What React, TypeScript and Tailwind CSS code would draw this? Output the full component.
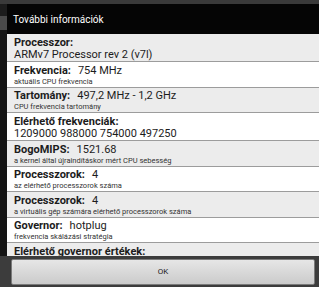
type Row = {
  label: string
  value?: string
  below?: string
  sub?: string
}

const rows: Row[] = [
  { label: "Processzor:", below: "ARMv7 Processor rev 2 (v7l)" },
  { label: "Frekvencia:", value: "754 MHz", sub: "aktuális CPU frekvencia" },
  { label: "Tartomány:", value: "497,2 MHz - 1,2 GHz", sub: "CPU frekvencia tartomány" },
  { label: "Elérhető frekvenciák:", below: "1209000 988000 754000 497250" },
  { label: "BogoMIPS:", value: "1521.68", sub: "a kernel által újraindításkor mért CPU sebesség" },
  { label: "Processzorok:", value: "4", sub: "az elérhető processzorok száma" },
  { label: "Processzorok:", value: "4", sub: "a virtuális gép számára elérhető processzorok száma" },
  { label: "Governor:", value: "hotplug", sub: "frekvencia skálázási stratégia" },
  { label: "Elérhető governor értékek:", below: "hotplug interactive conservative ondemand userspace powersave performance" },
]

export default function App() {
  return (
    <div className="w-[319px] h-[287px] bg-[#161616] flex flex-col overflow-hidden" style={{ fontFamily: "Roboto, 'Liberation Sans', sans-serif" }}>
      <div className="h-[4px] shrink-0 bg-[#3a3a3a]" />
      <div className="flex flex-1 min-h-0">
        <div className="w-[7px] flex flex-col">
          <div className="h-[12px] bg-[#1c1c1c]" />
          <div className="h-[14px] bg-[#4a4a4a]" />
          <div className="flex-1 bg-[#141414]" />
        </div>
        <div className="flex-1 flex flex-col min-w-0">
          <div className="h-[30px] shrink-0 bg-[#050505] flex items-center px-[6px] text-white text-[10px]">
            További információk
          </div>
          <div className="flex-1 min-h-0 overflow-hidden">
            {rows.map((r, i) => (
              <div
                key={i}
                className={`px-[7px] pt-[2.5px] border-b border-[#9c9c9c] text-[#1c1c1c] ${i % 2 === 0 ? "bg-[#ececec]" : "bg-white"} ${r.below ? "pb-[0.5px]" : ""}`}
              >
                <div className="text-[11px] leading-[12px] whitespace-nowrap">
                  <span className="font-bold">{r.label}</span>
                  {r.value && <span className="ml-[7px]">{r.value}</span>}
                </div>
                {r.below && <div className="text-[11px] leading-[12px] whitespace-nowrap">{r.below}</div>}
                {r.sub && <div className="text-[7.5px] leading-[10px] text-[#333] whitespace-nowrap">{r.sub}</div>}
              </div>
            ))}
          </div>
        </div>
      </div>
      <div className="h-[31px] shrink-0 bg-[#3c3c3c] flex items-center pl-[11px] pr-[4px]">
        <button className="w-full h-[26px] border border-[#7a7a7a] rounded-[2px] bg-gradient-to-b from-[#e6e6e6] to-[#cbcbcb] text-[8px] leading-[10px] text-[#222]">
          OK
        </button>
      </div>
    </div>
  )
}
